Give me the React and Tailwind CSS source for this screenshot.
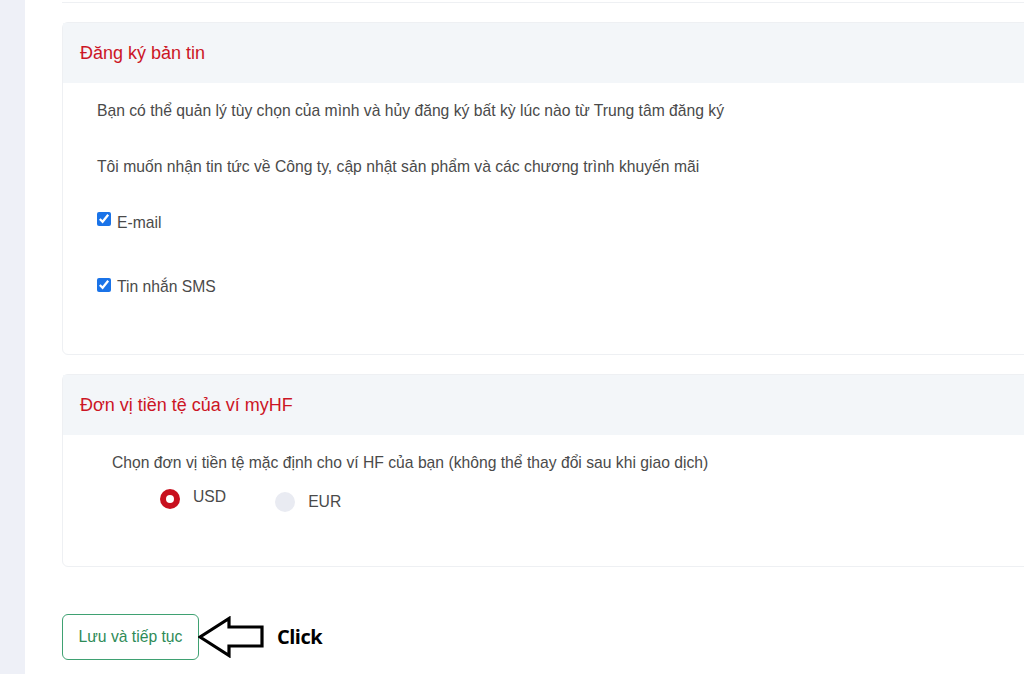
export default function App() {
  return (
    <div className="flex h-[674px] w-[1024px] overflow-hidden bg-white font-['Liberation_Sans',Arial,sans-serif]">
      <div className="w-[25px] shrink-0 bg-[#eef0f7]" />

      <div className="flex w-[1000px] shrink-0 flex-col pl-[37px]">
        <div className="h-[3px] w-full border-b border-[#eef0f3]" />

        <div className="mt-[19px] w-[1000px] rounded-md border border-[#eef0f3]">
          <div className="flex h-[60px] items-center bg-[#f3f6f9] px-[17px] text-[18px] text-[#cc1525]">
            Đăng ký bản tin
          </div>
          <div className="px-[34px] pb-[55px] pt-[16px] text-[15.7px] leading-[24px] text-[#4a4a4a]">
            <p>Bạn có thể quản lý tùy chọn của mình và hủy đăng ký bất kỳ lúc nào từ Trung tâm đăng ký</p>
            <p className="mt-[32px]">Tôi muốn nhận tin tức về Công ty, cập nhật sản phẩm và các chương trình khuyến mãi</p>
            <label className="mt-[32px] flex items-center gap-[6px]">
              <input type="checkbox" defaultChecked className="mt-[-8px] h-[14px] w-[14px] accent-[#1a73e8]" />
              E-mail
            </label>
            <label className="mt-[40px] flex items-center gap-[6px]">
              <input type="checkbox" defaultChecked className="mt-[-4px] h-[14px] w-[14px] accent-[#1a73e8]" />
              Tin nhắn SMS
            </label>
          </div>
        </div>

        <div className="mt-[19px] w-[1000px] rounded-md border border-[#eef0f3]">
          <div className="flex h-[60px] items-center bg-[#f3f6f9] px-[17px] text-[18px] text-[#cc1525]">
            Đơn vị tiền tệ của ví myHF
          </div>
          <div className="pb-[52px] pl-[49px] pt-[16px] text-[15.7px] leading-[24px] text-[#4a4a4a]">
            <p>Chọn đơn vị tiền tệ mặc định cho ví HF của bạn (không thể thay đổi sau khi giao dịch)</p>
            <div className="mt-[14px] flex items-start pl-[48px]">
              <div className="flex items-center gap-[13px]">
                <span className="flex h-[20px] w-[20px] items-center justify-center rounded-full bg-[#c8101e]">
                  <span className="h-[8px] w-[8px] rounded-full bg-white" />
                </span>
                <span className="mt-[-4px]">USD</span>
              </div>
              <div className="ml-[49px] mt-[1px] flex items-center gap-[13px]">
                <span className="h-[20px] w-[20px] rounded-full bg-[#e9ebf2]" />
                <span>EUR</span>
              </div>
            </div>
          </div>
        </div>

        <div className="mt-[47px] flex items-center">
          <button
            type="button"
            className="h-[46px] w-[137px] rounded-md border border-[#3fa172] bg-white text-[15.7px] text-[#2e8b57]"
          >
            Lưu và tiếp tục
          </button>
          <svg width="68" height="42" viewBox="0 0 68 42" className="ml-[-1px]">
            <path
              d="M2 21 L31 2.5 L31 11 L64 11 L64 30 L31 30 L31 39.5 Z"
              fill="white"
              stroke="black"
              strokeWidth="3.2"
              strokeLinejoin="miter"
            />
          </svg>
          <span className="ml-[11px] font-['Open_Sans',sans-serif] text-[20px] font-bold tracking-[-0.5px] text-black">
            Click
          </span>
        </div>
      </div>
    </div>
  )
}
